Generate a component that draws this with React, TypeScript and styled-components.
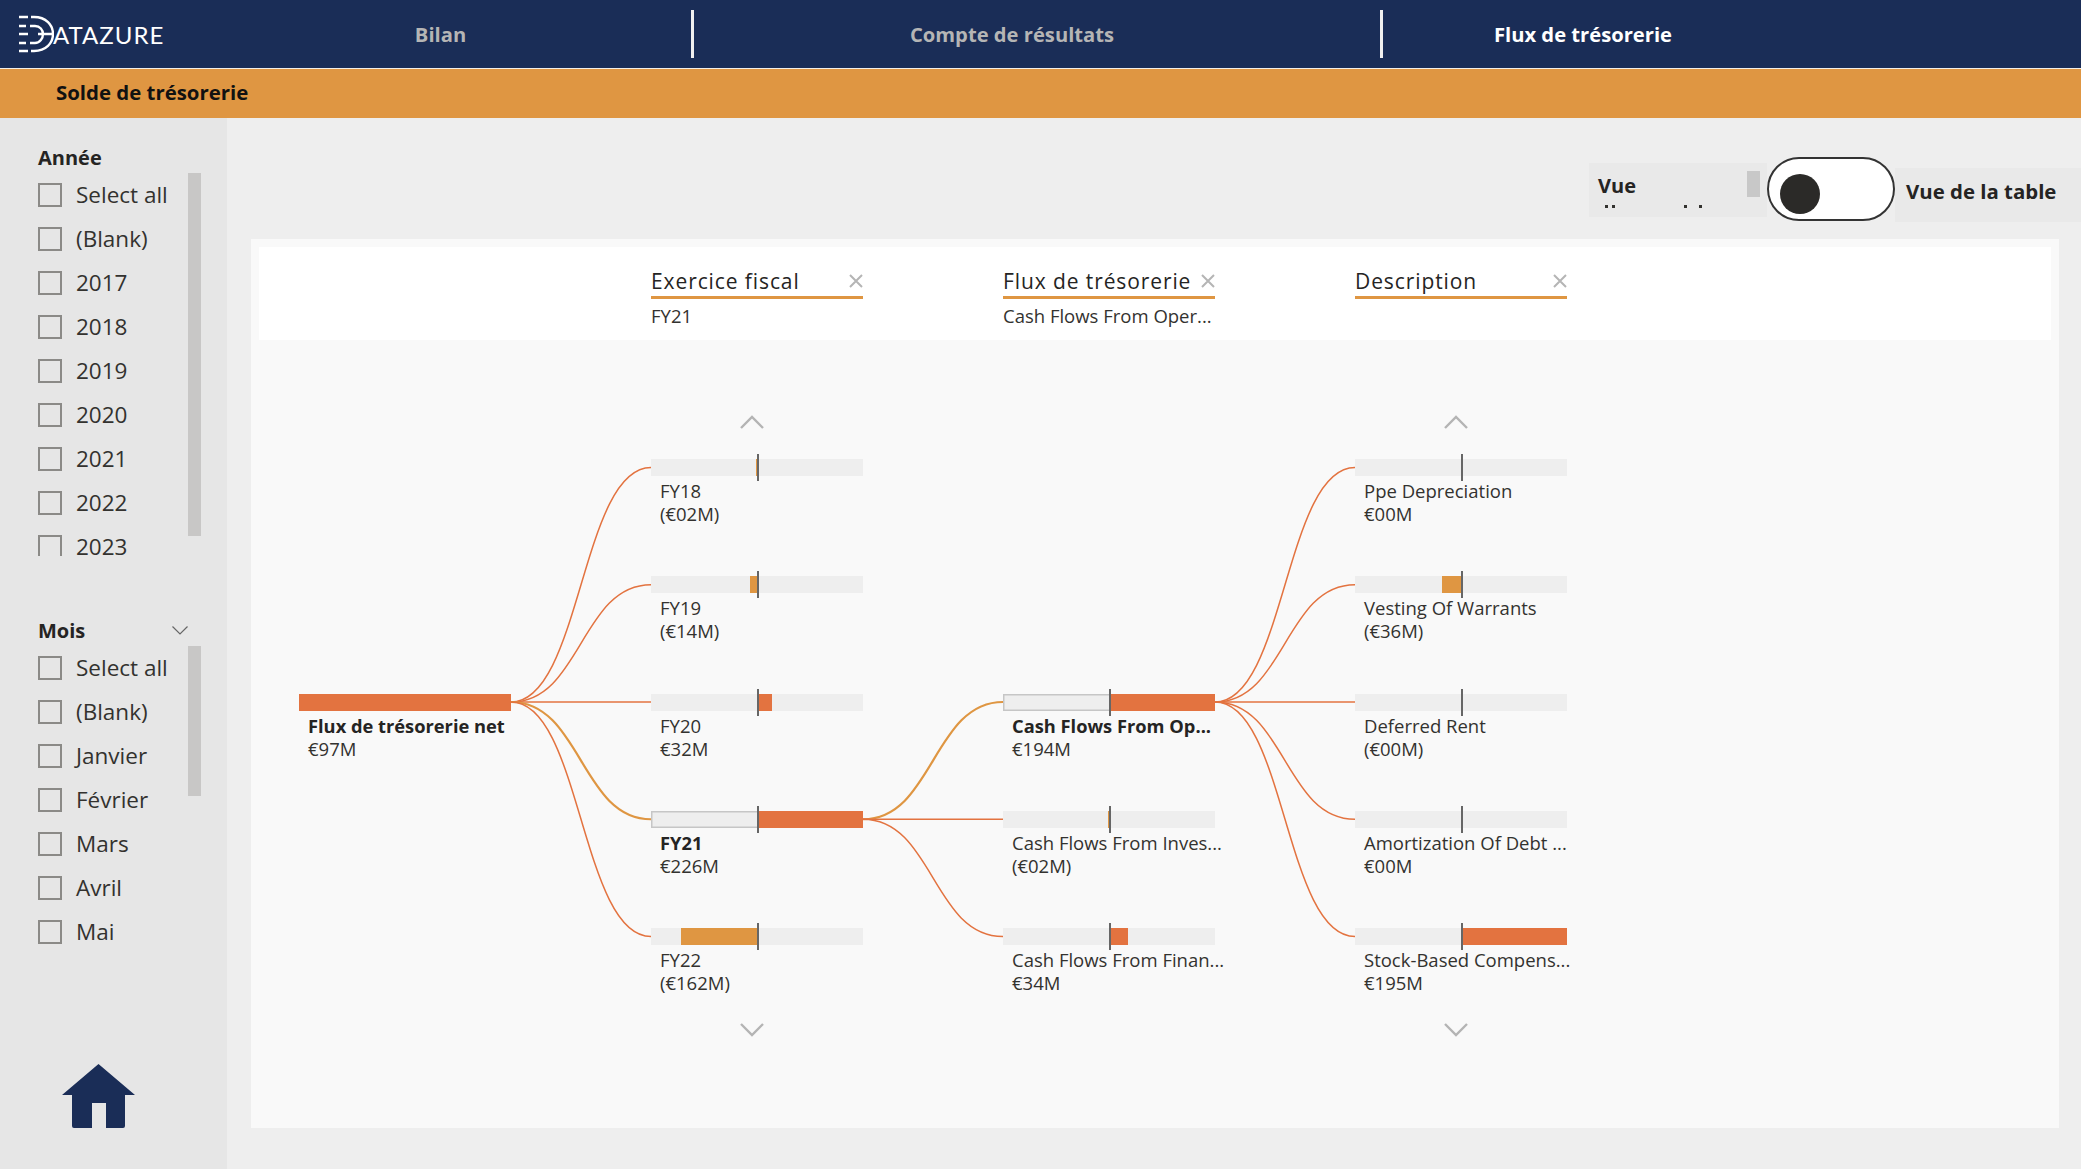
import React from 'react';
import styled, { createGlobalStyle } from 'styled-components';

const NAVY = '#1a2d57';
const AMBER = '#df9642';
const CORAL = '#e37340';
const FONT = '"Open Sans", "Noto Sans", sans-serif';

const GlobalStyle = createGlobalStyle`
  html, body {
    margin: 0;
    padding: 0;
    height: 100%;
    background: #eeeeee;
    font-family: ${FONT};
    color: #252423;
  }
  * { box-sizing: border-box; }
`;

const Page = styled.div`
  width: 2081px;
  height: 1169px;
  display: flex;
  flex-direction: column;
  overflow: hidden;
`;

// Top bar
const TopBar = styled.header`
  height: 69px;
  flex: none;
  display: flex;
  align-items: center;
  background: ${NAVY};
  border-bottom: 1px solid #f4efe6;
`;

const Logo = styled.div`
  width: 190px;
  height: 68px;
  flex: none;
  display: flex;
  align-items: center;
  padding-left: 18px;
`;

const LogoText = styled.span`
  font-family: Lato, sans-serif;
  font-weight: 400;
  font-size: 24px;
  letter-spacing: 1px;
  color: #fff;
  margin-left: -1px;
`;

const Tab = styled.div<{ $w: number; $pr: number; $active?: boolean; $last?: boolean }>`
  width: ${(p) => p.$w}px;
  height: 48px;
  flex: none;
  display: flex;
  align-items: center;
  justify-content: center;
  padding-right: ${(p) => p.$pr}px;
  font-size: 20.2px;
  font-weight: 700;
  color: ${(p) => (p.$active ? '#ffffff' : '#b5b5b5')};
  border-right: ${(p) => (p.$last ? 'none' : '3px solid #f0f0f0')};
`;

const SubBar = styled.div`
  height: 49px;
  flex: none;
  display: flex;
  align-items: center;
  padding: 0 0 3px 56px;
  background: ${AMBER};
  font-size: 20.4px;
  font-weight: 700;
  color: #111;
`;

const Body = styled.div`
  flex: 1;
  display: flex;
  min-height: 0;
`;

// Sidebar slicers
const Sidebar = styled.aside`
  width: 227px;
  flex: none;
  display: flex;
  flex-direction: column;
  padding-top: 25px;
  background: #e6e6e6;
`;

const Slicer = styled.section<{ $gap?: number }>`
  margin-top: ${(p) => p.$gap ?? 0}px;
  padding-left: 38px;
`;

const SlicerHead = styled.div`
  width: 150px;
  height: 30px;
  padding-bottom: 2px;
  display: flex;
  align-items: center;
  justify-content: space-between;
  font-size: 20px;
  font-weight: 700;
  color: #252423;
`;

const SlicerBody = styled.div`
  display: flex;
  align-items: flex-start;
`;

const SlicerList = styled.div<{ $h: number }>`
  width: 150px;
  height: ${(p) => p.$h}px;
`;

const SlicerRow = styled.div`
  height: 44px;
  padding-bottom: 1px;
  display: flex;
  align-items: center;
  gap: 14px;
  font-size: 22.5px;
  color: #33322f;
`;

// the last visible item of a scrolled list shows only the top of its box
const Check = styled.span<{ $cut?: boolean }>`
  width: 24px;
  height: ${(p) => (p.$cut ? 21 : 24)}px;
  flex: none;
  align-self: ${(p) => (p.$cut ? 'flex-start' : 'center')};
  margin-top: ${(p) => (p.$cut ? 10 : 1)}px;
  border: 2px solid #8b8a87;
  border-bottom: ${(p) => (p.$cut ? 'none' : '2px solid #8b8a87')};
  background: transparent;
`;

const Scrollbar = styled.div<{ $h: number }>`
  width: 13px;
  height: ${(p) => p.$h}px;
  background: #c8c7c6;
`;

const HomeButton = styled.div`
  margin-top: auto;
  padding: 0 0 41px 62px;
  line-height: 0;
`;

// Main area
const Main = styled.main`
  flex: 1;
  min-width: 0;
  background: #eeeeee;
`;

const ToggleRow = styled.div`
  height: 121px;
  display: flex;
  justify-content: flex-end;
  align-items: flex-start;
`;

const ViewBox = styled.div`
  width: 178px;
  height: 54px;
  margin-top: 45px;
  padding: 8px 7px 0 9px;
  display: flex;
  justify-content: space-between;
  background: #e9e9e9;
  overflow: hidden;
`;

const ViewText = styled.div`
  font-size: 20px;
  font-weight: 700;
  line-height: 30px;
`;

const ClippedMarks = styled.div`
  display: flex;
  height: 3px;
  margin: 4px 0 0 7px;
`;

const Mark = styled.span<{ $ml: number }>`
  width: 3px;
  height: 3px;
  margin-left: ${(p) => p.$ml}px;
  background: #33322f;
`;

const ViewScroll = styled.div`
  width: 13px;
  height: 26px;
  background: #c8c8c8;
`;

const Toggle = styled.div`
  width: 128px;
  height: 64px;
  margin-top: 39px;
  padding-left: 11px;
  display: flex;
  align-items: center;
  flex: none;
  background: #fff;
  border: 2px solid #333;
  border-radius: 32px;
`;

const Knob = styled.span`
  width: 40px;
  height: 40px;
  margin-top: 9px;
  border-radius: 50%;
  background: #2b2a28;
`;

const TableLabel = styled.div`
  width: 186px;
  height: 54px;
  margin-top: 50px;
  padding: 0 0 9px 11px;
  display: flex;
  align-items: center;
  font-size: 20.4px;
  font-weight: 700;
  background: #e9e9e9;
`;

// Decomposition tree card
const Card = styled.div`
  width: 1808px;
  height: 889px;
  margin-left: 24px;
  padding: 8px 8px 0;
  background: #f9f9f9;
`;

const FilterStrip = styled.div`
  height: 93px;
  padding: 19px 0 0 392px;
  display: grid;
  grid-template-columns: repeat(3, 212px);
  column-gap: 140px;
  align-content: start;
  background: #fff;
`;

const Filter = styled.div`
  min-width: 0;
`;

const FilterHead = styled.div`
  height: 33px;
  display: flex;
  align-items: center;
  justify-content: space-between;
  border-bottom: 3px solid ${AMBER};
  font-size: 21px;
  letter-spacing: 0.9px;
  color: #252423;
`;

const CloseSvg = styled.svg`
  margin-right: -1px;
`;

const FilterValue = styled.div`
  margin-top: 5px;
  font-size: 18.5px;
  line-height: 24px;
  color: #33322f;
  white-space: nowrap;
`;

const Tree = styled.div`
  position: relative;
  margin: 72px 0 0 40px;
  display: grid;
  grid-template-columns: repeat(4, 212px);
  grid-template-rows: 47px repeat(4, 117.25px) 92px 24px;
  column-gap: 140px;
`;

const Links = styled.svg`
  position: absolute;
  left: 0;
  top: 0;
  overflow: visible;
  pointer-events: none;
`;

const Chevron = styled.div<{ $col: number; $row: number; $shift: number }>`
  grid-column: ${(p) => p.$col};
  grid-row: ${(p) => p.$row};
  justify-self: center;
  align-self: start;
  margin: 3px 0 0 ${(p) => p.$shift}px;
  line-height: 0;
`;

const Node = styled.div<{ $col: number; $row: number }>`
  grid-column: ${(p) => p.$col};
  grid-row: ${(p) => p.$row};
  position: relative;
  min-width: 0;
`;

const Track = styled.div<{ $outlined?: boolean }>`
  position: relative;
  height: 17px;
  background: #eeeeee;
  box-shadow: ${(p) => (p.$outlined ? 'inset 0 0 0 1.5px #c6c6c6' : 'none')};
`;

const Fill = styled.div<{ $tone: 'pos' | 'neg' }>`
  position: absolute;
  top: 0;
  bottom: 0;
  background: ${(p) => (p.$tone === 'pos' ? CORAL : AMBER)};
`;

const Axis = styled.div`
  position: absolute;
  left: 106px;
  top: -5px;
  bottom: -5px;
  width: 2px;
  background: #666;
`;

const NodeLabel = styled.div`
  margin-top: 3px;
  padding-left: 9px;
  width: 225px;
  font-size: 18.5px;
  line-height: 23px;
  color: #33322f;
`;

const NodeName = styled.div<{ $bold?: boolean }>`
  white-space: nowrap;
  font-size: ${(p) => (p.$bold ? 18.3 : 18.5)}px;
  font-weight: ${(p) => (p.$bold ? 700 : 400)};
  color: ${(p) => (p.$bold ? '#252423' : '#33322f')};
`;

const ROW_H = 117.25;
const COL_W = 352;
const BAR_W = 212;

const rowY = (row: number) => 47 + row * ROW_H + 8.5;

interface TreeNode {
  col: number;
  row: number;
  name: string;
  value: string;
  // signed width of the bar from the axis, in pixels
  bar: number;
  selected?: boolean;
}

const nodes: TreeNode[] = [
  { col: 1, row: 0, name: 'FY18', value: '(€02M)', bar: -2 },
  { col: 1, row: 1, name: 'FY19', value: '(€14M)', bar: -8 },
  { col: 1, row: 2, name: 'FY20', value: '€32M', bar: 14 },
  { col: 1, row: 3, name: 'FY21', value: '€226M', bar: 105, selected: true },
  { col: 1, row: 4, name: 'FY22', value: '(€162M)', bar: -77 },
  { col: 2, row: 2, name: 'Cash Flows From Op...', value: '€194M', bar: 105, selected: true },
  { col: 2, row: 3, name: 'Cash Flows From Inves...', value: '(€02M)', bar: -2 },
  { col: 2, row: 4, name: 'Cash Flows From Finan...', value: '€34M', bar: 18 },
  { col: 3, row: 0, name: 'Ppe Depreciation', value: '€00M', bar: 0 },
  { col: 3, row: 1, name: 'Vesting Of Warrants', value: '(€36M)', bar: -20 },
  { col: 3, row: 2, name: 'Deferred Rent', value: '(€00M)', bar: 0 },
  { col: 3, row: 3, name: 'Amortization Of Debt ...', value: '€00M', bar: 0 },
  { col: 3, row: 4, name: 'Stock-Based Compens...', value: '€195M', bar: 105 },
];

const linkPath = (col: number, fromRow: number, toRow: number) => {
  const x0 = (col - 1) * COL_W + BAR_W;
  const x1 = col * COL_W;
  const mid = (x0 + x1) / 2;
  const y0 = rowY(fromRow);
  const y1 = rowY(toRow);
  return `M${x0} ${y0} C${mid} ${y0} ${mid} ${y1} ${x1} ${y1}`;
};

const parentRow: Record<number, number> = { 1: 2, 2: 3, 3: 2 };

const TreeLinks = () => (
  <Links width={1268} height={640} viewBox="0 0 1268 640" fill="none">
    {nodes.map((n) => (
      <path
        key={`${n.col}-${n.row}`}
        d={linkPath(n.col, parentRow[n.col], n.row)}
        stroke={n.selected ? AMBER : CORAL}
        strokeWidth={n.selected ? 2.2 : 1.5}
      />
    ))}
  </Links>
);

const ChevronIcon = ({ up }: { up?: boolean }) => (
  <svg width="24" height="14" viewBox="0 0 24 14" fill="none">
    <polyline
      points={up ? '1,13 12,2 23,13' : '1,1 12,12 23,1'}
      stroke="#b4b4b4"
      strokeWidth="2.4"
    />
  </svg>
);

const CloseIcon = () => (
  <CloseSvg width="16" height="16" viewBox="0 0 16 16" fill="none">
    <path d="M2 2 L14 14 M14 2 L2 14" stroke="#b5b5b5" strokeWidth="2" />
  </CloseSvg>
);

const LogoMark = () => (
  <svg width="36" height="38" viewBox="0 0 36 38" fill="none" stroke="#fff" strokeWidth="2.4">
    <path d="M1 2 H10 M1 11 H8 M1 19 H10 M1 28 H8 M1 36 H10" />
    <path d="M13 2 H16 C28 2 35 10 35 19 C35 28 28 36 16 36 H13" />
    <path d="M12 11 H17 C22 11 25 15 25 19 C25 23 22 28 17 28 H12 M20 19 H35" />
  </svg>
);

const HomeIcon = () => (
  <svg width="73" height="64" viewBox="0 0 73 64" fill={NAVY}>
    <path d="M36.5 0 L73 31 H63 V62 Q63 64 61 64 H44 V39 H30 V64 H12 Q10 64 10 62 V31 H0 Z" />
  </svg>
);

const years = ['Select all', '(Blank)', '2017', '2018', '2019', '2020', '2021', '2022', '2023'];
const months = ['Select all', '(Blank)', 'Janvier', 'Février', 'Mars', 'Avril', 'Mai'];

const filters = [
  { title: 'Exercice fiscal', value: 'FY21' },
  { title: 'Flux de trésorerie', value: 'Cash Flows From Oper...' },
  { title: 'Description', value: '' },
];

const App: React.FC = () => {
  return (
    <Page>
      <GlobalStyle />
      <TopBar>
        <Logo>
          <LogoMark />
          <LogoText>ATAZURE</LogoText>
        </Logo>
        <Tab $w={504} $pr={0}>Bilan</Tab>
        <Tab $w={689} $pr={50}>Compte de résultats</Tab>
        <Tab $w={400} $pr={0} $active $last>Flux de trésorerie</Tab>
      </TopBar>
      <SubBar>Solde de trésorerie</SubBar>
      <Body>
        <Sidebar>
          <Slicer>
            <SlicerHead>Année</SlicerHead>
            <SlicerBody>
              <SlicerList $h={383}>
                {years.map((y) => (
                  <SlicerRow key={y}><Check $cut={y === '2023'} />{y}</SlicerRow>
                ))}
              </SlicerList>
              <Scrollbar $h={363} />
            </SlicerBody>
          </Slicer>
          <Slicer $gap={60}>
            <SlicerHead>
              Mois
              <svg width="16" height="9" viewBox="0 0 16 9" fill="none">
                <polyline points="0.5,0.5 8,8 15.5,0.5" stroke="#666" strokeWidth="1.2" />
              </svg>
            </SlicerHead>
            <SlicerBody>
              <SlicerList $h={308}>
                {months.map((m) => (
                  <SlicerRow key={m}><Check />{m}</SlicerRow>
                ))}
              </SlicerList>
              <Scrollbar $h={150} />
            </SlicerBody>
          </Slicer>
          <HomeButton><HomeIcon /></HomeButton>
        </Sidebar>
        <Main>
          <ToggleRow>
            <ViewBox>
              <div>
                <ViewText>Vue</ViewText>
                <ClippedMarks>
                  <Mark $ml={0} />
                  <Mark $ml={4} />
                  <Mark $ml={69} />
                  <Mark $ml={12} />
                </ClippedMarks>
              </div>
              <ViewScroll />
            </ViewBox>
            <Toggle><Knob /></Toggle>
            <TableLabel>Vue de la table</TableLabel>
          </ToggleRow>
          <Card>
            <FilterStrip>
              {filters.map((f) => (
                <Filter key={f.title}>
                  <FilterHead>
                    {f.title}
                    <CloseIcon />
                  </FilterHead>
                  <FilterValue>{f.value}</FilterValue>
                </Filter>
              ))}
            </FilterStrip>
            <Tree>
              <TreeLinks />
              <Chevron $col={2} $row={1} $shift={-10}><ChevronIcon up /></Chevron>
              <Chevron $col={4} $row={1} $shift={-10}><ChevronIcon up /></Chevron>
              <Chevron $col={2} $row={7} $shift={-10}><ChevronIcon /></Chevron>
              <Chevron $col={4} $row={7} $shift={-10}><ChevronIcon /></Chevron>
              <Node $col={1} $row={4}>
                <Track>
                  <Fill $tone="pos" style={{ left: 0, width: '100%' }} />
                </Track>
                <NodeLabel>
                  <NodeName $bold>Flux de trésorerie net</NodeName>
                  €97M
                </NodeLabel>
              </Node>
              {nodes.map((n) => (
                <Node key={`${n.col}-${n.row}`} $col={n.col + 1} $row={n.row + 2}>
                  <Track $outlined={n.selected}>
                    {n.bar !== 0 && (
                      <Fill
                        $tone={n.bar > 0 ? 'pos' : 'neg'}
                        style={
                          n.bar > 0
                            ? { left: 107, width: n.bar }
                            : { left: 107 + n.bar, width: -n.bar }
                        }
                      />
                    )}
                    <Axis />
                  </Track>
                  <NodeLabel>
                    <NodeName $bold={n.selected}>{n.name}</NodeName>
                    {n.value}
                  </NodeLabel>
                </Node>
              ))}
            </Tree>
          </Card>
        </Main>
      </Body>
    </Page>
  );
};

export default App;
